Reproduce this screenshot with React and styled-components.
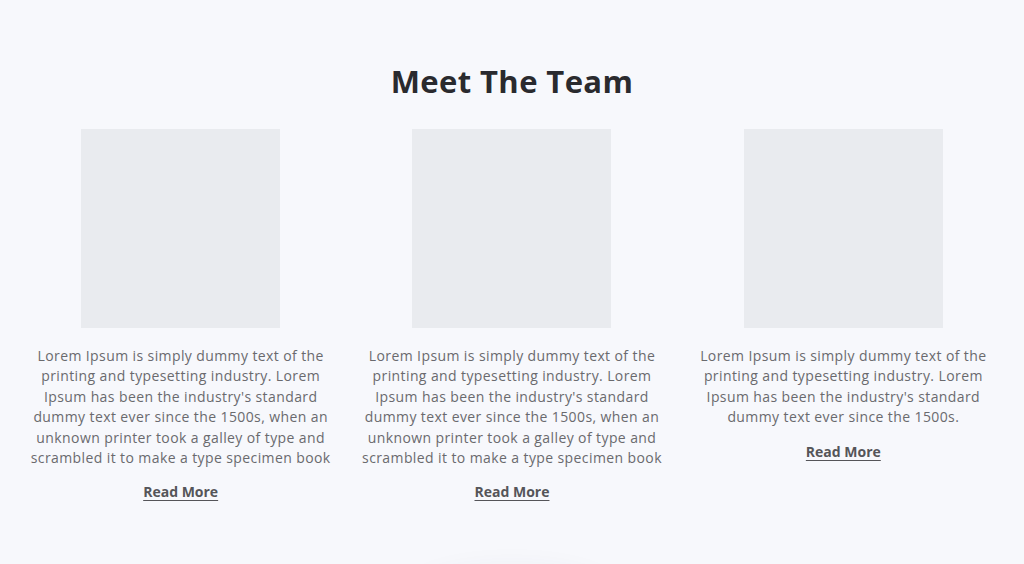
import React from "react";
import styled, { createGlobalStyle } from "styled-components";

const Global = createGlobalStyle`
  html, body { margin: 0; padding: 0; background: #f7f8fc; }
  body { font-family: "Open Sans", "Noto Sans", sans-serif; overflow: hidden; }
`;

const Section = styled.section`
  padding: 58px 15px 0;
  display: flex;
  flex-direction: column;
  align-items: center;
`;

const Title = styled.h2`
  margin: 0;
  font-family: "Open Sans", sans-serif;
  font-weight: 700;
  font-size: 31px;
  line-height: 46px;
  color: #2a2a2e;
  letter-spacing: 0.4px;
`;

const Grid = styled.div`
  margin-top: 25px;
  width: 100%;
  display: grid;
  grid-template-columns: repeat(3, 1fr);
  align-items: start;
`;

const Member = styled.div`
  display: flex;
  flex-direction: column;
  align-items: center;
  padding: 0 10px;
`;

const Photo = styled.div`
  width: 199px;
  height: 199px;
  background: #e9ebef;
`;

const Bio = styled.p`
  margin: 18px 0 0;
  font-size: 14px;
  line-height: 20.4px;
  color: #6a6a6e;
  text-align: center;
  letter-spacing: 0.4px;
`;

const ReadMore = styled.a`
  margin-top: 14px;
  font-size: 14px;
  line-height: 20px;
  font-weight: 700;
  color: #555559;
  letter-spacing: 0;
  text-decoration: underline;
  text-underline-offset: 3px;
  cursor: pointer;
`;

const NextCard = styled.div`
  margin: 70px auto 0;
  width: 200px;
  height: 60px;
  border-radius: 50%;
  box-shadow: 0 0 30px rgba(60, 70, 100, 0.07);
`;

const long =
  "Lorem Ipsum is simply dummy text of the printing and typesetting industry. Lorem Ipsum has been the industry's standard dummy text ever since the 1500s, when an unknown printer took a galley of type and scrambled it to make a type specimen book";
const short =
  "Lorem Ipsum is simply dummy text of the printing and typesetting industry. Lorem Ipsum has been the industry's standard dummy text ever since the 1500s.";

const team = [long, long, short];

export default function App() {
  return (
    <>
      <Global />
      <Section>
        <Title>Meet The Team</Title>
        <Grid>
          {team.map((t, i) => (
            <Member key={i}>
              <Photo />
              <Bio>{t}</Bio>
              <ReadMore>Read More</ReadMore>
            </Member>
          ))}
        </Grid>
      </Section>
      <NextCard />
    </>
  );
}
